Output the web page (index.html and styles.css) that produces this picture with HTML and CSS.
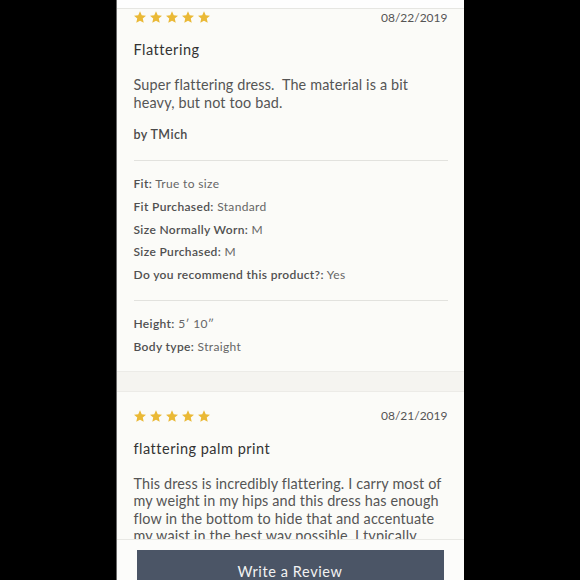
FILE: index.html
```html
<!DOCTYPE html>
<html>
<head>
<meta charset="utf-8">
<link rel="stylesheet" href="styles.css">
</head>
<body>
<div class="panel">
  <div class="topbar"></div>
  <div class="list">
    <div class="review review-scrolled">
      <div class="review-head">
        <div class="stars">
          <svg viewBox="2 2 20 19.5"><path d="M12 2l2.9 6.9 7.1.6-5.4 4.7 1.6 7.3L12 17.8 5.8 21.5l1.6-7.3L2 9.5l7.1-.6z"/></svg>
          <svg viewBox="2 2 20 19.5"><path d="M12 2l2.9 6.9 7.1.6-5.4 4.7 1.6 7.3L12 17.8 5.8 21.5l1.6-7.3L2 9.5l7.1-.6z"/></svg>
          <svg viewBox="2 2 20 19.5"><path d="M12 2l2.9 6.9 7.1.6-5.4 4.7 1.6 7.3L12 17.8 5.8 21.5l1.6-7.3L2 9.5l7.1-.6z"/></svg>
          <svg viewBox="2 2 20 19.5"><path d="M12 2l2.9 6.9 7.1.6-5.4 4.7 1.6 7.3L12 17.8 5.8 21.5l1.6-7.3L2 9.5l7.1-.6z"/></svg>
          <svg viewBox="2 2 20 19.5"><path d="M12 2l2.9 6.9 7.1.6-5.4 4.7 1.6 7.3L12 17.8 5.8 21.5l1.6-7.3L2 9.5l7.1-.6z"/></svg>
        </div>
        <div class="date">08/22/2019</div>
      </div>
      <h3 class="title">Flattering</h3>
      <p class="body">Super flattering dress.&nbsp; The material is a bit heavy, but not too bad.</p>
      <p class="author">by TMich</p>
      <div class="attrs">
        <div class="attr"><span class="label">Fit:</span> True to size</div>
        <div class="attr"><span class="label">Fit Purchased:</span> Standard</div>
        <div class="attr"><span class="label">Size Normally Worn:</span> M</div>
        <div class="attr"><span class="label">Size Purchased:</span> M</div>
        <div class="attr"><span class="label">Do you recommend this product?:</span> Yes</div>
      </div>
      <div class="attrs">
        <div class="attr"><span class="label">Height:</span> 5′ 10″</div>
        <div class="attr"><span class="label">Body type:</span> Straight</div>
      </div>
    </div>
    <div class="band"></div>
    <div class="review">
      <div class="review-head">
        <div class="stars">
          <svg viewBox="2 2 20 19.5"><path d="M12 2l2.9 6.9 7.1.6-5.4 4.7 1.6 7.3L12 17.8 5.8 21.5l1.6-7.3L2 9.5l7.1-.6z"/></svg>
          <svg viewBox="2 2 20 19.5"><path d="M12 2l2.9 6.9 7.1.6-5.4 4.7 1.6 7.3L12 17.8 5.8 21.5l1.6-7.3L2 9.5l7.1-.6z"/></svg>
          <svg viewBox="2 2 20 19.5"><path d="M12 2l2.9 6.9 7.1.6-5.4 4.7 1.6 7.3L12 17.8 5.8 21.5l1.6-7.3L2 9.5l7.1-.6z"/></svg>
          <svg viewBox="2 2 20 19.5"><path d="M12 2l2.9 6.9 7.1.6-5.4 4.7 1.6 7.3L12 17.8 5.8 21.5l1.6-7.3L2 9.5l7.1-.6z"/></svg>
          <svg viewBox="2 2 20 19.5"><path d="M12 2l2.9 6.9 7.1.6-5.4 4.7 1.6 7.3L12 17.8 5.8 21.5l1.6-7.3L2 9.5l7.1-.6z"/></svg>
        </div>
        <div class="date">08/21/2019</div>
      </div>
      <h3 class="title">flattering palm print</h3>
      <p class="body">This dress is incredibly flattering. I carry most of my weight in my hips and this dress has enough flow in the bottom to hide that and accentuate my waist in the best way possible. I typically wear a medium and this fit perfectly.</p>
    </div>
  </div>
  <div class="footer">
    <button class="write-btn">Write a Review</button>
  </div>
</div>
</body>
</html>
```
FILE: styles.css
```css
html, body {
  margin: 0;
  padding: 0;
  background: #000;
}
body {
  display: flex;
  justify-content: center;
  font-family: "Lato", "Open Sans", sans-serif;
}
.panel {
  width: 348px;
  height: 580px;
  margin-right: 1px;
  border-left: 1px solid #6a6a6a;
  box-sizing: border-box;
  background: #fbfbf8;
  display: flex;
  flex-direction: column;
  overflow: hidden;
}
.topbar {
  height: 8px;
  flex: none;
  background: #fefefe;
  border-bottom: 1px solid #e6e6e2;
}
.list {
  flex: 1;
  overflow: hidden;
}
.review {
  padding: 15px 16px 12px 17px;
}
.review-scrolled {
  margin-top: -16px;
}
.review-head {
  display: flex;
  justify-content: space-between;
  align-items: center;
  height: 18px;
}
.stars {
  display: flex;
  gap: 4px;
}
.stars svg {
  width: 12px;
  height: 12px;
  fill: #eab936;
}
.date {
  font-size: 12px;
  color: #555;
  letter-spacing: 0;
}
.title {
  margin: 14px 0 0;
  font-size: 14.5px;
  line-height: 20px;
  font-weight: 400;
  color: #333;
  letter-spacing: 0.5px;
}
.body {
  margin: 16px 0 0;
  font-size: 14.4px;
  line-height: 17.5px;
  color: #555;
  letter-spacing: 0.15px;
}
.author {
  margin: 15px 0 0;
  font-size: 12.5px;
  line-height: 18px;
  font-weight: 600;
  color: #4a4a4a;
  letter-spacing: 0.4px;
}
.attrs {
  border-top: 1px solid #e2e2de;
  margin-top: 16px;
  padding-top: 12px;
}
.attrs + .attrs {
  margin-top: 13px;
}
.attr {
  font-size: 12px;
  line-height: 22.8px;
  color: #666;
  letter-spacing: 0.35px;
}
.label {
  font-weight: 600;
  color: #505050;
}
.band {
  height: 19px;
  background: #f5f4f0;
  border-top: 1px solid #ecebe7;
  border-bottom: 1px solid #ecebe7;
}
.footer {
  flex: none;
  height: 41px;
  box-sizing: border-box;
  border-top: 1px solid #e8e8e4;
  background: #fcfcfa;
  padding: 10px 20px 0;
  overflow: hidden;
}
.write-btn {
  display: block;
  width: 100%;
  height: 42px;
  border: none;
  background: #4b5566;
  color: #f2f2f2;
  font-family: inherit;
  font-size: 14.5px;
  letter-spacing: 0.6px;
}
```
